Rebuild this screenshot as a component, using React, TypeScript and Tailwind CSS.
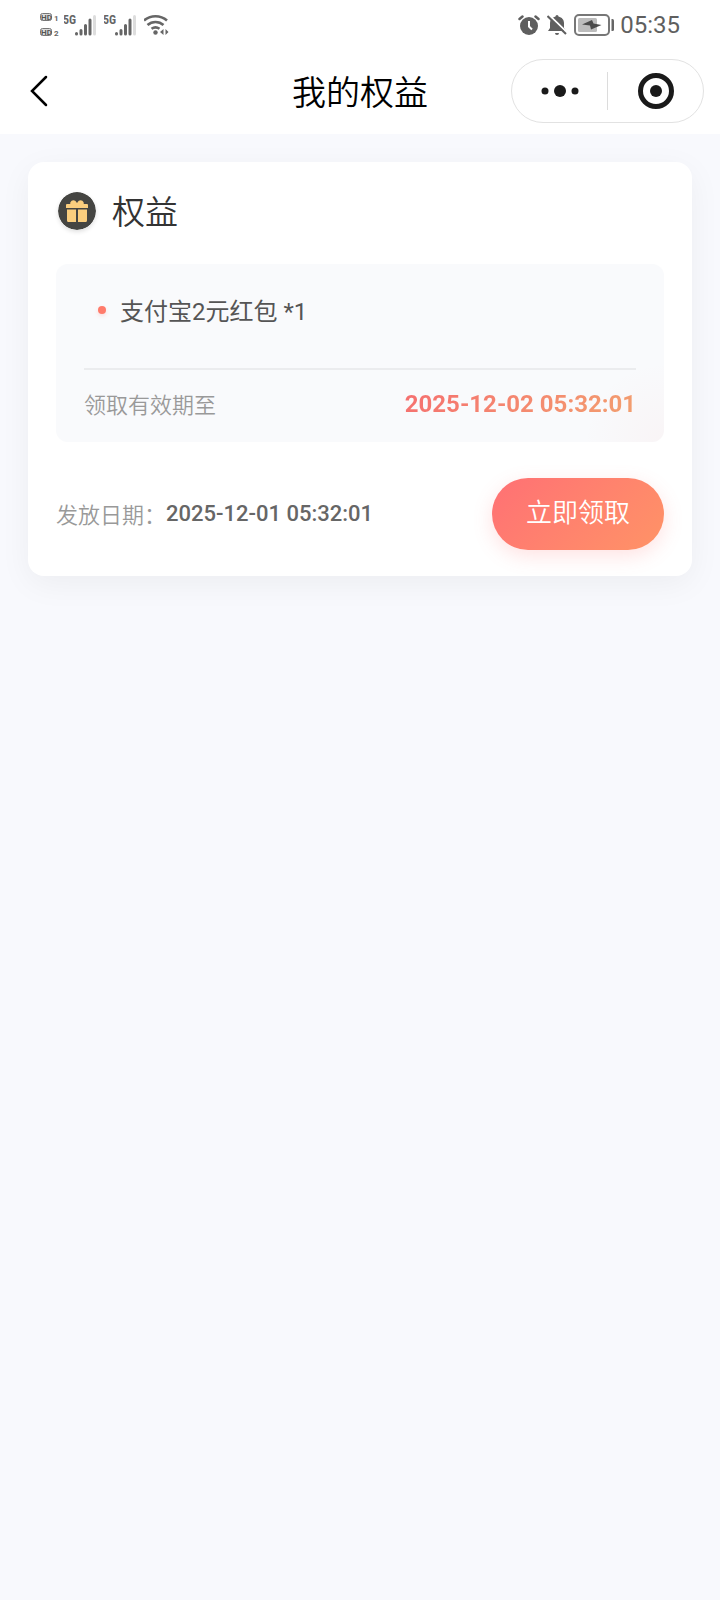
import type { ReactNode } from "react";

type Benefit = {
  id: string;
  items: string[];
  expiresAt: string;
  issuedAt: string;
};

const benefits: Benefit[] = [
  {
    id: "alipay-2",
    items: ["支付宝2元红包 *1"],
    expiresAt: "2025-12-02 05:32:01",
    issuedAt: "2025-12-01 05:32:01"
  }
];

function HdIcon() {
  return (
    <svg width="20" height="28" viewBox="0 0 20 28" fill="none" className="font-bold">
      {["1", "2"].map((sim, i) => (
        <g key={sim} transform={`translate(0 ${i * 15})`}>
          <rect x="0.5" y="2.5" width="11" height="7" rx="2" fill="#ddd" stroke="#777" />
          <text x="1" y="9" fontSize="8" fill="#555">HD</text>
          <text x="14" y="10" fontSize="8" fill="#666">{sim}</text>
        </g>
      ))}
    </svg>
  );
}

function SignalIcon() {
  return (
    <svg width="34" height="24" viewBox="0 0 34 24" strokeLinecap="round" strokeWidth="3">
      <text x="-1" y="11" fontSize="12" fill="#666" className="font-['Liberation_Sans_Narrow','Roboto_Condensed',Roboto,sans-serif] font-bold">5G</text>
      <path d="M12.500 20.500v.5M17 17.500v3.500M21.500 12.500v8.500M26 7v14" stroke="#666" />
      <path d="M30.500 3.500v17.500" stroke="#ddd" />
    </svg>
  );
}

function WifiIcon() {
  return (
    <svg width="28" height="24" viewBox="0 0 28 24" fill="none" stroke="#666" strokeWidth="2.600">
      <path d="M0 7.500a17.500 17.500 0 0 1 23 0" />
      <path d="M3.500 12a12 12 0 0 1 16 0" />
      <path d="M7.500 15.800a7 7 0 0 1 8 0" />
      <circle cx="11.500" cy="19.500" r="2.200" fill="#666" stroke="none" />
      <path d="M19.500 16v6l-3.500-3zM21.500 16v6l3-3z" fill="#666" stroke="none" />
    </svg>
  );
}

function AlarmIcon() {
  return (
    <svg width="22" height="22" viewBox="0 0 22 22" fill="none">
      <circle cx="11" cy="12" r="9" fill="#5f5f5f" />
      <path d="M1.500 5 4.500 2.500M20.500 5 17.500 2.500" stroke="#5f5f5f" strokeWidth="2.500" strokeLinecap="round" />
      <path d="M11 7v5.500l3 3" stroke="#fff" strokeWidth="2" />
    </svg>
  );
}

function BellOffIcon() {
  return (
    <svg width="20" height="22" viewBox="0 0 20 22">
      <path d="M8.500 2.500a1.500 1.500 0 0 1 3 0c3.500.800 5.500 3.500 5.500 6.500v5l2 3H1l2-3V9c0-3 2-5.700 5.500-6.500zM8 19h4a2 2 0 0 1-4 0z" fill="#5f5f5f" />
      <path d="M1.500 .5 20 18.500" stroke="#fff" strokeWidth="2" />
      <path d="M.5 2 19 20" stroke="#5f5f5f" strokeWidth="2" />
    </svg>
  );
}

function BatteryIcon() {
  return (
    <svg width="41" height="22" viewBox="0 0 41 22" fill="none">
      <rect x="1" y="1" width="34" height="20" rx="4" stroke="#777" strokeWidth="2" />
      <rect x="4" y="4" width="19" height="14" rx="1.500" fill="#bcbcbc" />
      <path d="M37.500 5h1q1.500 0 1.500 1.500v9q0 1.500-1.500 1.500h-1z" fill="#666" />
      <path d="M8 10.500 18 6l1.500 3.500 8 1.500-10.500 4.500-1-4z" fill="#4a4a4a" />
    </svg>
  );
}

function GiftIcon() {
  return (
    <svg width="38" height="38" viewBox="0 0 38 38" className="rounded-full shadow-[0_2px_4px_rgba(0,0,0,0.12)]">
      <circle cx="19" cy="19" r="19" fill="#454542" />
      <g fill="#fbce7e">
        <path d="M9 12h3.200a3.200 3.200 0 0 1 5-3.200q1.400 1.200 1.800 2.400.4-1.200 1.800-2.400a3.200 3.200 0 0 1 5 3.200H29a1 1 0 0 1 1 1v3H8v-3a1 1 0 0 1 1-1z" />
        <path d="M9 17.500h9V30h-7.500A1.500 1.500 0 0 1 9 28.500zM20 17.500h9v11a1.500 1.500 0 0 1-1.500 1.500H20z" />
      </g>
    </svg>
  );
}

function StatusBar() {
  return (
    <div className="flex h-12 items-center justify-between pt-0.5 pr-10 pl-10 text-[#5f5f5f]">
      <div className="flex items-center gap-1">
        <HdIcon />
        <div className="flex items-center gap-1.5">
          <SignalIcon />
          <SignalIcon />
          <WifiIcon />
        </div>
      </div>
      <div className="flex items-center gap-[7px]">
        <AlarmIcon />
        <BellOffIcon />
        <div className="flex items-center gap-[5px]">
          <BatteryIcon />
          <span className="text-2xl">05:35</span>
        </div>
      </div>
    </div>
  );
}

function NavBar({ title }: { title: string }) {
  return (
    <div className="grid h-[86px] grid-cols-[1fr_auto_1fr] items-center px-4">
      <button type="button" aria-label="返回" className="ml-2 flex h-12 w-8 items-center justify-center">
        <svg width="20" height="32" viewBox="0 0 20 32" fill="none" stroke="#000" strokeWidth="2.500" strokeLinecap="round">
          <path d="M16 2 2 16l14 14" />
        </svg>
      </button>
      <h1 className="pt-1 text-[34px] leading-[48px] font-[350] text-black">{title}</h1>
      <div className="flex h-16 w-[193px] items-center justify-self-end rounded-full border border-[#e2e2e2]">
        <button type="button" aria-label="更多" className="flex h-full flex-1 items-center justify-center">
          <svg width="38" height="12" viewBox="0 0 38 12" fill="#1a1a1a">
            <circle cx="4" cy="6" r="3.500" />
            <circle cx="19" cy="6" r="6" />
            <circle cx="34" cy="6" r="3.500" />
          </svg>
        </button>
        <span className="h-[38px] w-px bg-[#dcdcdc]" />
        <button type="button" aria-label="关闭" className="flex h-full flex-1 items-center justify-center">
          <svg width="36" height="36" viewBox="0 0 36 36">
            <circle cx="18" cy="18" r="15.500" fill="none" stroke="#1a1a1a" strokeWidth="5" />
            <circle cx="18" cy="18" r="6" fill="#1a1a1a" />
          </svg>
        </button>
      </div>
    </div>
  );
}

function Label({ children }: { children: ReactNode }) {
  return <span className="text-[22px] leading-8 font-[350] text-[#999]">{children}</span>;
}

function BenefitCard({ benefit }: { benefit: Benefit }) {
  return (
    <section className="rounded-2xl bg-white px-7 pt-6 pb-[26px] shadow-[0_8px_32px_rgba(0,0,0,0.05)]">
      <div className="flex h-[52px] items-start gap-4 pt-1.5 pl-0.5">
        <GiftIcon />
        <h2 className="text-[33px] leading-[42px] font-[350] text-[#333]">权益</h2>
      </div>

      <div className="mt-[26px] rounded-xl bg-[#f9fafc] bg-[radial-gradient(circle_at_bottom_right,rgba(255,112,100,0.04),transparent_80px)] px-7 pt-7 pb-5">
        <ul className="pb-9 pl-[14px]">
          {benefit.items.map((item) => (
            <li key={item} className="flex items-start gap-[14px] text-2xl leading-10 text-[#555]">
              <span className="mt-[14px] size-2 rounded-full bg-[#ff7b6b] shadow-[0_2px_4px_rgba(255,112,100,0.2)]" />
              {item}
            </li>
          ))}
        </ul>
        <div className="flex items-start justify-between border-t-2 border-[#ebecee] pt-[18px]">
          <span className="pt-0.5">
            <Label>领取有效期至</Label>
          </span>
          <time className="bg-linear-135 from-[#f56e6f] to-[#f2a06f] bg-clip-text text-2xl leading-8 font-bold text-transparent">
            {benefit.expiresAt}
          </time>
        </div>
      </div>

      <div className="mt-9 flex items-center justify-between">
        <p className="flex items-center">
          <span className="pt-1">
            <Label>发放日期：</Label>
          </span>
          <time className="text-[22px] leading-8 font-medium text-[#666]">{benefit.issuedAt}</time>
        </p>
        <button
          type="button"
          className="h-[72px] w-[172px] rounded-full bg-linear-135 from-[#ff7074] to-[#ff9366] pb-0.5 text-[26px] font-[350] text-white shadow-[0_6px_20px_rgba(255,112,112,0.2)]"
        >
          立即领取
        </button>
      </div>
    </section>
  );
}

export default function App() {
  return (
    <div className="min-h-screen bg-[#f8f9fd] font-[Roboto,'Noto_Sans_CJK_SC',sans-serif]">
      <header className="bg-white">
        <StatusBar />
        <NavBar title="我的权益" />
      </header>
      <main className="space-y-7 p-7">
        {benefits.map((benefit) => (
          <BenefitCard key={benefit.id} benefit={benefit} />
        ))}
      </main>
    </div>
  );
}
